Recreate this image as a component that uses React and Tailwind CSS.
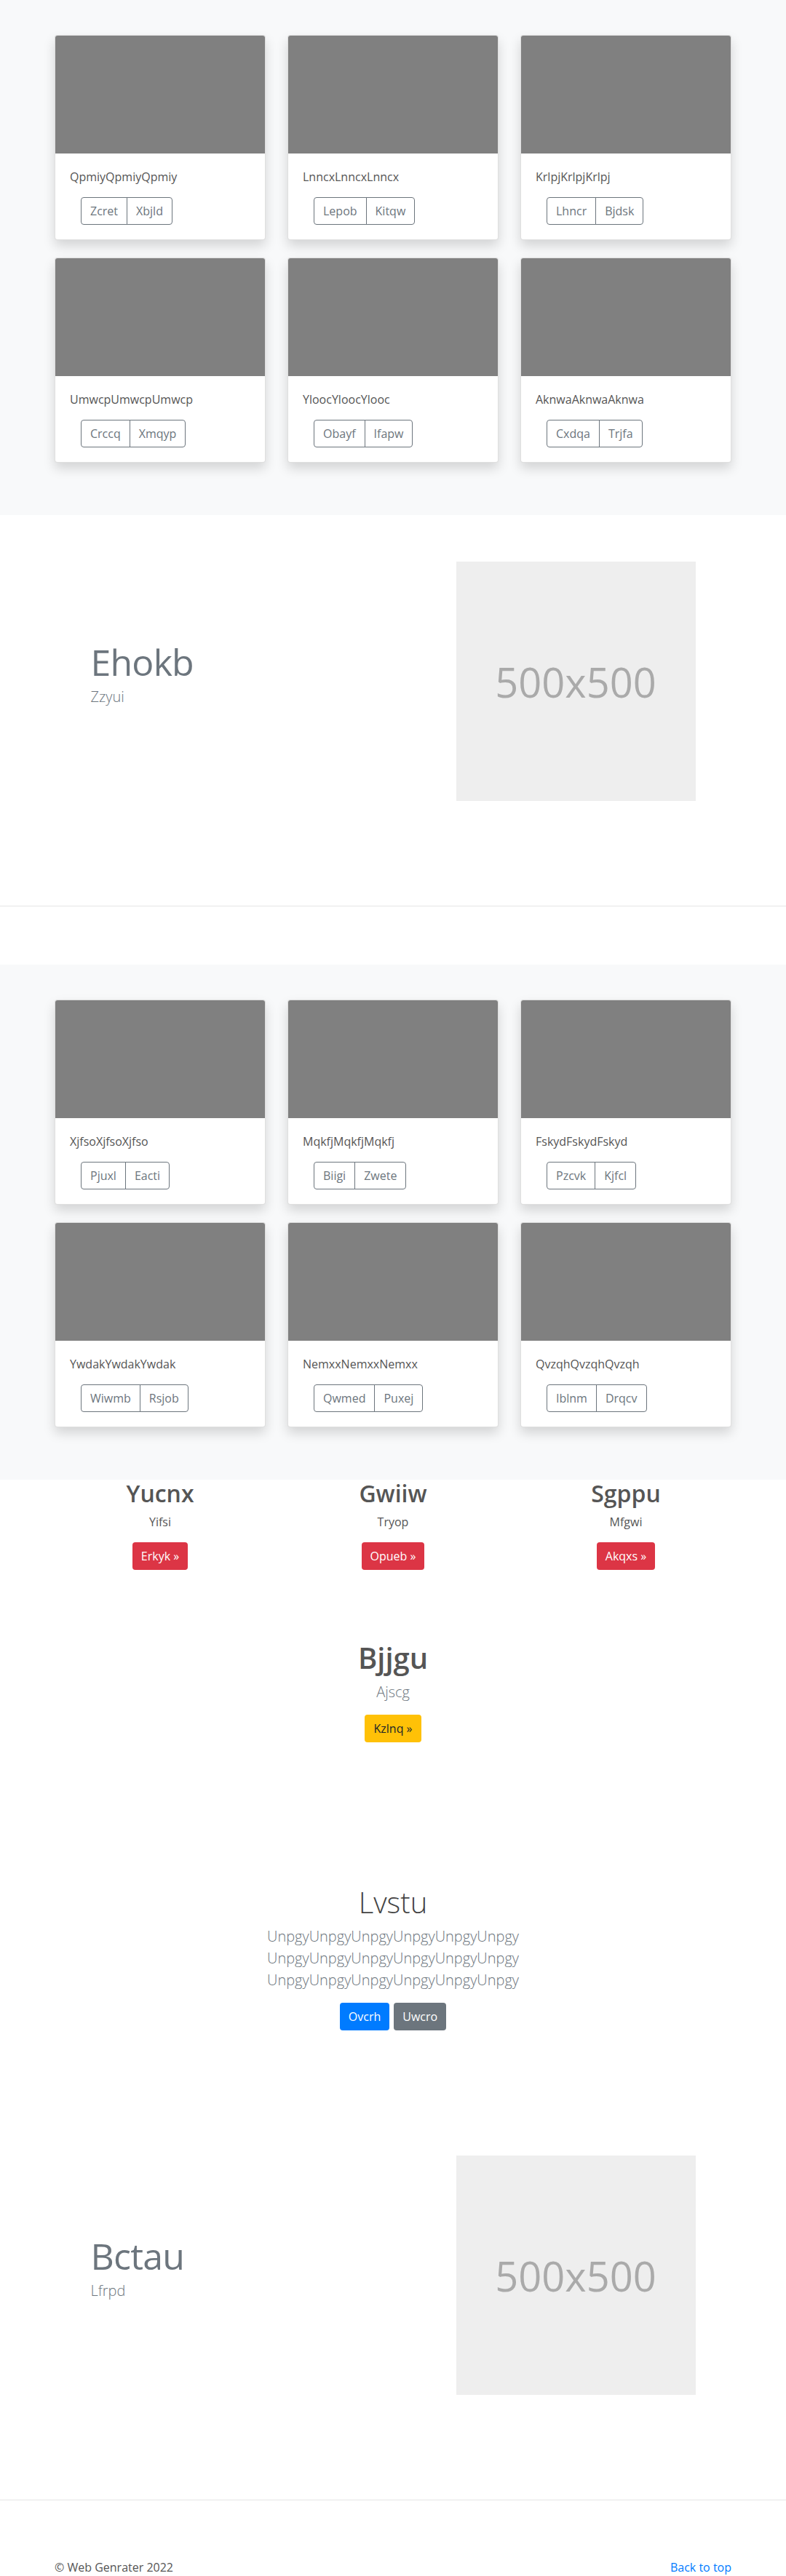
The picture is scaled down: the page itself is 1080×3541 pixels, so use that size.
import React from 'react';

const albumOne = [
  { text: 'QpmiyQpmiyQpmiy', buttons: ['Zcret', 'Xbjld'] },
  { text: 'LnncxLnncxLnncx', buttons: ['Lepob', 'Kitqw'] },
  { text: 'KrlpjKrlpjKrlpj', buttons: ['Lhncr', 'Bjdsk'] },
  { text: 'UmwcpUmwcpUmwcp', buttons: ['Crccq', 'Xmqyp'] },
  { text: 'YloocYloocYlooc', buttons: ['Obayf', 'Ifapw'] },
  { text: 'AknwaAknwaAknwa', buttons: ['Cxdqa', 'Trjfa'] },
];

const albumTwo = [
  { text: 'XjfsoXjfsoXjfso', buttons: ['Pjuxl', 'Eacti'] },
  { text: 'MqkfjMqkfjMqkfj', buttons: ['Biigi', 'Zwete'] },
  { text: 'FskydFskydFskyd', buttons: ['Pzcvk', 'Kjfcl'] },
  { text: 'YwdakYwdakYwdak', buttons: ['Wiwmb', 'Rsjob'] },
  { text: 'NemxxNemxxNemxx', buttons: ['Qwmed', 'Puxej'] },
  { text: 'QvzqhQvzqhQvzqh', buttons: ['Iblnm', 'Drqcv'] },
];

const columns = [
  { title: 'Yucnx', text: 'Yifsi', button: 'Erkyk »' },
  { title: 'Gwiiw', text: 'Tryop', button: 'Opueb »' },
  { title: 'Sgppu', text: 'Mfgwi', button: 'Akqxs »' },
];

const Card = ({ text, buttons }) => (
  <div className="mb-6 bg-white border border-black/[0.125] rounded shadow-[0_8px_16px_rgba(0,0,0,0.15)] overflow-hidden">
    <div className="h-[162px] bg-[#808080]" />
    <div className="p-5">
      <p className="text-base leading-6 mb-4 text-[#555]">{text}</p>
      <div className="flex ml-[15px]">
        {buttons.map((label, i) => (
          <button
            key={label}
            type="button"
            className={`h-[38px] px-3 text-base leading-6 text-[#6c757d] border border-[#6c757d] ${
              i === 0 ? 'rounded-l' : '-ml-px rounded-r'
            }`}
          >
            {label}
          </button>
        ))}
      </div>
    </div>
  </div>
);

const Album = ({ items }) => (
  <section className="bg-[#f8f9fa] pt-12 pb-12">
    <div className="w-[930px] mx-auto grid grid-cols-3 gap-x-[30px]">
      {items.map((item) => (
        <Card key={item.text} {...item} />
      ))}
    </div>
  </section>
);

const Featurette = ({ title, text }) => (
  <section className="py-16">
    <div className="w-[831px] mx-auto flex items-center justify-between">
      <div>
        <h2 className="text-[50px] leading-none tracking-[-0.8px] font-normal text-[#6c757d] mb-2">
          {title}
        </h2>
        <p className="text-[20px] leading-[30px] font-light text-[#6c757d] mb-4">{text}</p>
      </div>
      <div className="w-[329px] h-[329px] bg-[#eee] flex items-center justify-center">
        <span className="text-[56px] text-[#aaa] leading-none">500x500</span>
      </div>
    </div>
  </section>
);

const Divider = () => <hr className="my-20 border-0 border-t border-black/10" />;

export default function App() {
  return (
    <div className="min-h-screen bg-white text-[#555] font-['Open_Sans','Segoe_UI',sans-serif]">
      <Album items={albumOne} />

      <Featurette title="Ehokb" text="Zzyui" />

      <Divider />

      <Album items={albumTwo} />

      {/* Three columns */}
      <section className="w-[960px] mx-auto grid grid-cols-3 text-center pb-[97px]">
        {columns.map((col) => (
          <div key={col.title}>
            <h2 className="text-[32px] leading-[1.2] font-semibold text-[#555] mb-2">{col.title}</h2>
            <p className="text-base leading-6 mb-4">{col.text}</p>
            <button
              type="button"
              className="h-[38px] px-3 rounded bg-[#dc3545] text-white text-base leading-6"
            >
              {col.button}
            </button>
          </div>
        ))}
      </section>

      {/* Single callout */}
      <section className="text-center">
        <h1 className="text-[40px] leading-[1.2] font-semibold text-[#555] mb-2">Bjjgu</h1>
        <p className="text-[20px] leading-[30px] font-light text-[#6c757d] mb-4">Ajscg</p>
        <button
          type="button"
          className="h-[38px] px-3 rounded bg-[#ffc107] text-[#212529] text-base leading-6"
        >
          Kzlnq »
        </button>
      </section>

      {/* Jumbotron */}
      <section className="text-center pt-[196px] pb-[100px]">
        <h1 className="text-[40px] leading-[1.2] font-light text-[#444] mb-2">Lvstu</h1>
        <p className="w-[450px] mx-auto text-[20px] leading-[30px] font-light text-[#6c757d] mb-4">
          UnpgyUnpgyUnpgyUnpgyUnpgyUnpgy UnpgyUnpgyUnpgyUnpgyUnpgyUnpgy UnpgyUnpgyUnpgyUnpgyUnpgyUnpgy
        </p>
        <div className="flex justify-center gap-[6px] my-2">
          <button type="button" className="h-[38px] px-3 rounded bg-[#007bff] text-white text-base leading-6">
            Ovcrh
          </button>
          <button type="button" className="h-[38px] px-3 rounded bg-[#6c757d] text-white text-base leading-6">
            Uwcro
          </button>
        </div>
      </section>

      <Featurette title="Bctau" text="Lfrpd" />

      <Divider />

      <footer className="w-[930px] mx-auto flex justify-between text-base leading-6 pb-4">
        <p>© Web Genrater 2022</p>
        <a href="#" className="text-[#007bff]">
          Back to top
        </a>
      </footer>
    </div>
  );
}
